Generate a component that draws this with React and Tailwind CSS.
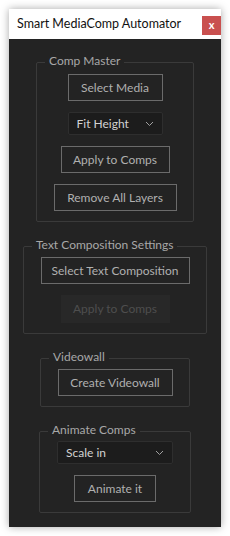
import React from 'react';

const font = { fontFamily: 'Lato, "Noto Sans", sans-serif' };

const Btn = ({ children, w }) => (
  <button className={`h-[27px] ${w} shrink-0 border border-[#6b6b6b] bg-[#232323] text-[12px] text-[#b0b0b0] leading-none`}>
    {children}
  </button>
);

const Chevron = () => (
  <svg width="9" height="6" viewBox="0 0 9 6" className="text-[#a0a0a0]">
    <polyline points="1,1 4.5,4.5 8,1" fill="none" stroke="currentColor" strokeWidth="1" />
  </svg>
);

const Dropdown = ({ label, w }) => (
  <div className={`h-[23px] ${w} shrink-0 flex items-center justify-between pl-[8px] pr-[8px] bg-[#1c1c1c] border border-[#2e2e2e] rounded-[2px] text-[12px] text-[#d2d2d2]`}>
    <span>{label}</span>
    <Chevron />
  </div>
);

// bordered box with a caption sitting on the top edge
const Group = ({ title, w, children, pt = 'pt-[10px]', pb = 'pb-[10px]', gap = 'gap-[11px]' }) => (
  <div className={`relative ${w} border border-[#3a3a3a] rounded-[2px] ${pt} ${pb} flex flex-col items-center ${gap}`}>
    <span className="absolute -top-[10px] left-[8px] px-[4px] bg-[#232323] text-[12px] leading-[16px] text-[#a8a8a8] whitespace-nowrap">
      {title}
    </span>
    {children}
  </div>
);

export default function App() {
  return (
    <div className="min-h-screen bg-white p-[9px]" style={font}>
      <div className="w-[212px] h-[518px] flex flex-col shadow-[0_0_8px_rgba(0,0,0,0.35)]">
        <div className="h-[30px] bg-white flex items-center justify-between pl-[8px]">
          <span className="text-[12.5px] text-[#111] whitespace-nowrap">Smart MediaComp Automator</span>
          <div className="w-[19px] h-[19px] mt-[2px] bg-[#c9504f] flex items-center justify-center text-white text-[11px] font-bold leading-none pb-[2px]">
            x
          </div>
        </div>
        <div className="flex-1 bg-[#232323] flex flex-col items-center pt-[23px] gap-[24px]">
          <Group title="Comp Master" w="w-[158px]" pt="pt-[11px]">
            <Btn w="w-[95px]">Select Media</Btn>
            <Dropdown label="Fit Height" w="w-[95px]" />
            <Btn w="w-[109px]">Apply to Comps</Btn>
            <Btn w="w-[123px]">Remove All Layers</Btn>
          </Group>
          <Group title="Text Composition Settings" w="w-[184px]">
            <Btn w="w-[149px]">Select Text Composition</Btn>
            <div className="h-[28px] w-[109px] bg-[#282828] flex items-center justify-center text-[12px] text-[#4e4e4e]">
              Apply to Comps
            </div>
          </Group>
          <Group title="Videowall" w="w-[150px]">
            <Btn w="w-[115px]">Create Videowall</Btn>
          </Group>
          <Group title="Animate Comps" w="w-[152px]" pt="pt-[9px]">
            <Dropdown label="Scale in" w="w-[116px]" />
            <Btn w="w-[82px]">Animate it</Btn>
          </Group>
        </div>
      </div>
    </div>
  );
}
